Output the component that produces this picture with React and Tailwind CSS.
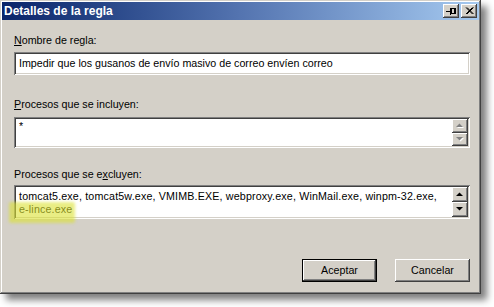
import React from 'react'

const raised =
  'shadow-[inset_-1px_-1px_0_#404040,inset_1px_1px_0_#ffffff,inset_-2px_-2px_0_#808080,inset_2px_2px_0_#d4d0c8]'
const sunken =
  'shadow-[inset_1px_1px_0_#808080,inset_-1px_-1px_0_#ffffff,inset_2px_2px_0_#404040,inset_-2px_-2px_0_#d4d0c8]'

function Arrow({ up, disabled }) {
  const pts = up ? '0,4 7,4 3.5,0.5' : '0,0 7,0 3.5,3.5'
  return (
    <svg width="8" height="5" viewBox="0 0 8 5" className="block">
      {disabled && <polygon points={pts} fill="#ffffff" transform="translate(1,1)" />}
      <polygon points={pts} fill={disabled ? '#808080' : '#000000'} />
    </svg>
  )
}

function ScrollBar({ disabled }) {
  return (
    <div className="w-[16px] flex flex-col">
      <div className={`flex-1 bg-[#d4d0c8] flex items-center justify-center ${raised}`}>
        <Arrow up disabled={disabled} />
      </div>
      <div className={`flex-1 bg-[#d4d0c8] flex items-center justify-center ${raised}`}>
        <Arrow disabled={disabled} />
      </div>
    </div>
  )
}

function CaptionButton({ children }) {
  return (
    <div className={`w-[16px] h-[14px] bg-[#d4d0c8] flex items-center justify-center ${raised}`}>
      {children}
    </div>
  )
}

function Label({ children, className = '' }) {
  return <div className={`h-[14px] leading-[14px] ${className}`}>{children}</div>
}

function Button({ children, isDefault }) {
  return (
    <div className={`w-[75px] h-[23px] ${isDefault ? 'border border-black' : ''}`}>
      <div className={`w-full h-full bg-[#d4d0c8] flex items-center justify-center ${raised}`}>
        {children}
      </div>
    </div>
  )
}

export default function App() {
  return (
    <div className="w-[494px] h-[307px] bg-white font-['Liberation_Sans',Arial,sans-serif] text-[10.7px] text-black">
      <div className="w-[481px] h-[294px] bg-[#d4d0c8] p-[2px] shadow-[inset_-1px_-1px_0_#404040,inset_1px_1px_0_#d4d0c8,inset_-2px_-2px_0_#808080,inset_2px_2px_0_#ffffff,6px_6px_7px_rgba(0,0,0,0.5)] flex flex-col">
        {/* title bar */}
        <div className="h-[18px] bg-gradient-to-r from-[#0a246a] via-[#5474b0] to-[#a6caf0] flex items-center pl-[2px] pr-[2px]">
          <span className="flex-1 text-white font-bold text-[12px] leading-[18px]">Detalles de la regla</span>
          <div className="flex gap-[2px]">
            <CaptionButton>
              <svg width="12" height="10" viewBox="0 0 12 10" className="block">
                <path d="M1 5H5M5 2V9" stroke="#000" strokeWidth="1" fill="none" shapeRendering="crispEdges" />
                <rect x="6" y="2.5" width="4" height="5" stroke="#000" fill="none" shapeRendering="crispEdges" />
                <path d="M9 2v6M6 7.5h4" stroke="#000" strokeWidth="1" shapeRendering="crispEdges" />
              </svg>
            </CaptionButton>
            <CaptionButton>
              <svg width="9" height="8" viewBox="0 0 9 8" className="block">
                <path d="M1 0.5L7.5 7M2 0.5L8.5 7M7.5 0.5L1 7M8.5 0.5L2 7" stroke="#000" strokeWidth="1" />
              </svg>
            </CaptionButton>
          </div>
        </div>

        {/* body */}
        <div className="pl-[12px] pt-[13px] flex flex-col">
          <Label>
            <span className="underline">N</span>ombre de regla:
          </Label>
          <div className={`mt-[5px] w-[456px] h-[23px] bg-white ${sunken} pl-[5px] flex items-center`}>
            Impedir que los gusanos de envío masivo de correo envíen correo
          </div>

          <Label className="mt-[22px]">
            <span className="underline">P</span>rocesos que se incluyen:
          </Label>
          <div className={`mt-[6px] w-[456px] h-[31px] bg-white ${sunken} p-[2px] flex`}>
            <div className="flex-1 pl-[3px] pt-[1px] leading-[13px]">*</div>
            <ScrollBar disabled />
          </div>

          <Label className="mt-[19px]">
            Procesos que se e<span className="underline">x</span>cluyen:
          </Label>
          <div className={`mt-[4px] w-[456px] h-[34px] bg-white ${sunken} p-[2px] flex relative`}>
            <div className="flex-1 pl-[3px] pt-[3px] leading-[13px] whitespace-nowrap">
              <div className="tracking-[0.16px]">
                tomcat5.exe, tomcat5w.exe, VMIMB.EXE, webproxy.exe, WinMail.exe, winpm-32.exe,
              </div>
              <div className="tracking-[0.16px]">e-lince.exe</div>
            </div>
            <ScrollBar />
            <div className="absolute left-[-5px] top-[17px] w-[66px] h-[21px] bg-[rgba(218,225,50,0.6)] blur-[1.5px] rounded-[2px] pointer-events-none" />
          </div>

          <div className="mt-[40px] w-[456px] flex justify-end gap-[18px]">
            <Button isDefault>Aceptar</Button>
            <Button>Cancelar</Button>
          </div>
        </div>
      </div>
    </div>
  )
}
